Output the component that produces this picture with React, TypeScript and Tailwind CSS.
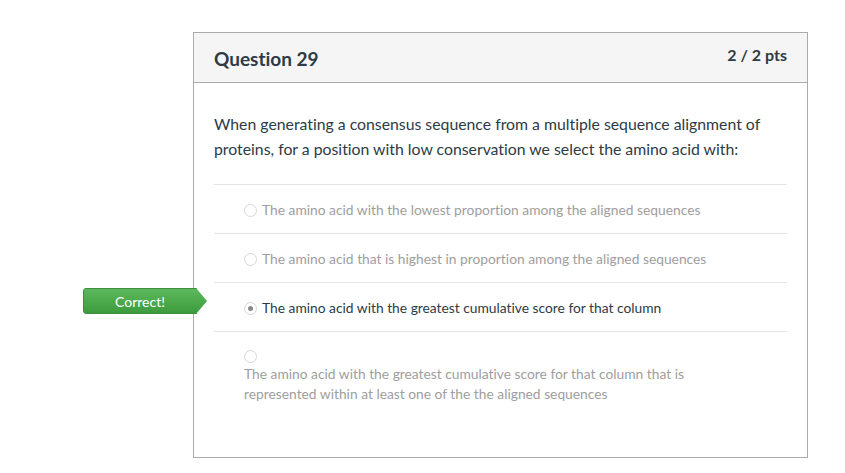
import React from "react";

const Radio = ({ checked }: { checked?: boolean }) => (
  <span className="relative block w-[13px] h-[13px] rounded-full border border-[#d6d6d6] bg-white shrink-0">
    {checked && (
      <span className="absolute left-1/2 top-1/2 w-[5px] h-[5px] -ml-[2.5px] -mt-[2.5px] rounded-full bg-[#8a8a8a]" />
    )}
  </span>
);

export default function App() {
  return (
    <div
      className="min-h-screen bg-white pt-[32px] pl-[193px] [font-variant-ligatures:none]"
      style={{ fontFamily: "Lato, 'Noto Sans', sans-serif" }}
    >
      <div className="w-[615px] h-[426px] border border-[#ababab] bg-white">
        <div className="h-[50px] bg-[#f5f5f5] border-b border-[#ababab] flex justify-between px-[20px]">
          <div className="pt-[14px] text-[19px] font-bold text-[#2d3b45] leading-[24px]">Question 29</div>
          <div className="pt-[11px] text-[16px] font-bold text-[#2d3b45] leading-[22px]">2 / 2 pts</div>
        </div>
        <div className="px-[20px] pt-[28px]">
          <p className="text-[15.8px] leading-[25px] text-[#2d3b45]">
            When generating a consensus sequence from a multiple sequence alignment of proteins, for a position with low conservation we select the amino acid with:
          </p>
          <div className="mt-[23px]">
            <div className="border-t border-[#e5e5e5] h-[49px] flex items-center pt-[3px] pl-[30px] gap-[5px] text-[13.8px] text-[#9e9e9e]">
              <Radio />
              <span>The amino acid with the lowest proportion among the aligned sequences</span>
            </div>
            <div className="border-t border-[#e5e5e5] h-[49px] flex items-center pt-[3px] pl-[30px] gap-[5px] text-[13.8px] text-[#9e9e9e]">
              <Radio />
              <span>The amino acid that is highest in proportion among the aligned sequences</span>
            </div>
            <div className="relative border-t border-[#e5e5e5] h-[49px] flex items-center pt-[3px] pl-[30px] gap-[5px] text-[13.8px] text-[#2d3b45]">
              <div className="absolute left-[-131px] top-[5px] flex items-center">
                <div className="w-[114px] h-[26px] rounded-l-[3px] bg-gradient-to-b from-[#5cb85c] to-[#3d9b3d] border border-[#3c8f3c] flex items-center justify-center text-white text-[14px]">
                  Correct!
                </div>
                <svg width="12" height="26" viewBox="0 0 12 26" className="-ml-[1px]">
                  <defs>
                    <linearGradient id="g" x1="0" y1="0" x2="0" y2="1">
                      <stop offset="0" stopColor="#5cb85c" />
                      <stop offset="1" stopColor="#3d9b3d" />
                    </linearGradient>
                  </defs>
                  <polygon points="0,0 11,13 0,26" fill="url(#g)" />
                </svg>
              </div>
              <Radio checked />
              <span>The amino acid with the greatest cumulative score for that column</span>
            </div>
            <div className="border-t border-[#e5e5e5] pl-[30px] pt-[18px] text-[13.8px] text-[#9e9e9e]">
              <Radio />
              <p className="leading-[20px] mt-[1px] w-[470px]">
                The amino acid with the greatest cumulative score for that column that is represented within at least one of the the aligned sequences
              </p>
            </div>
          </div>
        </div>
      </div>
    </div>
  );
}
